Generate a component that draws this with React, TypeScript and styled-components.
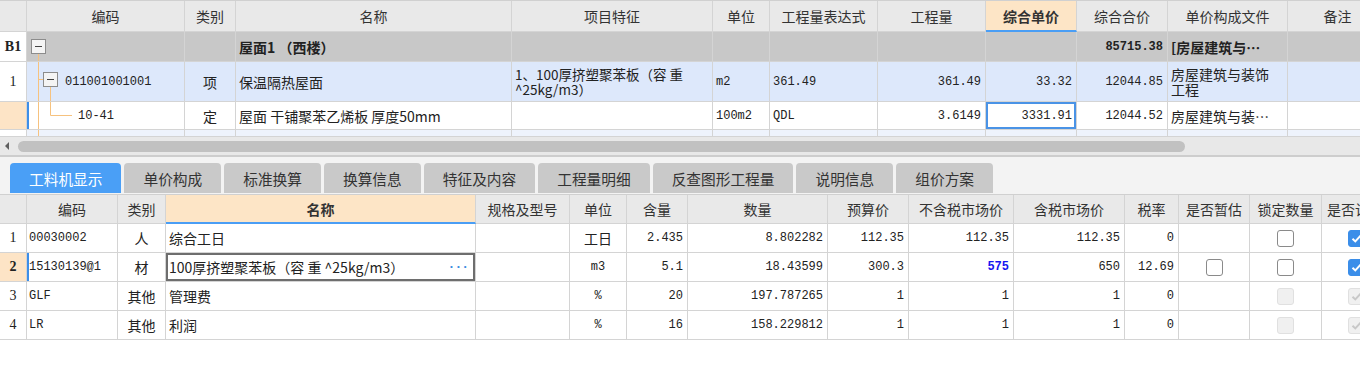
import React from "react";
import styled, { createGlobalStyle, css } from "styled-components";

const GlobalStyle = createGlobalStyle`
  html, body {
    margin: 0;
    padding: 0;
    background: #fff;
  }
  body {
    font-family: "Noto Sans CJK SC", "Noto Sans", sans-serif;
    color: #333;
  }
  * {
    box-sizing: border-box;
  }
`;

const CJK = `"Noto Sans CJK SC", "Noto Sans", sans-serif`;
const MONO = `"Liberation Mono", "Noto Sans CJK SC", monospace`;
const GRID = "#d4d4d4";
const TREE = "#f6c27f";

const TOP_COLS = [27, 158, 51, 276, 201, 57, 108, 108, 91, 91, 120, 100];
const BOTTOM_COLS = [27, 91, 48, 310, 94, 57, 61, 140, 81, 105, 111, 54, 71, 72, 70];
const tpl = (cols: number[]) => cols.map((c) => `${c}px`).join(" ");

type Align = "left" | "center" | "right";
type BoxState = "off" | "on" | "disabled" | "disabledOn";

export default function App() {
  return (
    <>
      <GlobalStyle />
      <Screen>
        <TopGrid>
          <GridRow $cols={tpl(TOP_COLS)} $h={31}>
            <HeadCell />
            <HeadCell>编码</HeadCell>
            <HeadCell>类别</HeadCell>
            <HeadCell>名称</HeadCell>
            <HeadCell>项目特征</HeadCell>
            <HeadCell>单位</HeadCell>
            <HeadCell>工程量表达式</HeadCell>
            <HeadCell>工程量</HeadCell>
            <HeadCell $active>综合单价</HeadCell>
            <HeadCell>综合合价</HeadCell>
            <HeadCell>单价构成文件</HeadCell>
            <HeadCell>备注</HeadCell>
          </GridRow>

          <GridRow $cols={tpl(TOP_COLS)} $h={30} $bg="#c8c8c8">
            <NoCell $bold>B1</NoCell>
            <Cell>
              <TreeGuide kind="root" h={30} />
            </Cell>
            <Cell />
            <Cell $bold>屋面1 （西楼）</Cell>
            <Cell />
            <Cell />
            <Cell />
            <Cell />
            <Cell />
            <Cell $mono $bold $align="right">85715.38</Cell>
            <Cell $bold>[房屋建筑与…</Cell>
            <Cell />
          </GridRow>

          <GridRow $cols={tpl(TOP_COLS)} $h={40} $bg="#dde8fb">
            <NoCell>1</NoCell>
            <Cell $mono $indent={38}>
              <TreeGuide kind="item" h={40} />
              <Label>011001001001</Label>
            </Cell>
            <Cell $align="center">项</Cell>
            <Cell>保温隔热屋面</Cell>
            <Cell $wrap $small>{"1、100厚挤塑聚苯板（容 重\n^25kg/m3）"}</Cell>
            <Cell $mono>m2</Cell>
            <Cell $mono>361.49</Cell>
            <Cell $mono $align="right">361.49</Cell>
            <Cell $mono $align="right">33.32</Cell>
            <Cell $mono $align="right">12044.85</Cell>
            <Cell $wrap>{"房屋建筑与装饰\n工程"}</Cell>
            <Cell />
          </GridRow>

          <GridRow $cols={tpl(TOP_COLS)} $h={28}>
            <NoCell $current />
            <Cell $mono $indent={51} $marker>
              <TreeGuide kind="leaf" h={28} />
              <Label>10-41</Label>
            </Cell>
            <Cell $align="center">定</Cell>
            <Cell>屋面 干铺聚苯乙烯板 厚度50mm</Cell>
            <Cell />
            <Cell $mono>100m2</Cell>
            <Cell $mono>QDL</Cell>
            <Cell $mono $align="right">3.6149</Cell>
            <Cell $mono $align="right" $focus="blue">3331.91</Cell>
            <Cell $mono $align="right">12044.52</Cell>
            <Cell>房屋建筑与装…</Cell>
            <Cell />
          </GridRow>

          <GridRow $cols={tpl(TOP_COLS)} $h={7} $bg="#eef3fc">
            <NoCell />
            <Cell>
              <TreeGuide kind="tail" h={7} />
            </Cell>
            {TOP_COLS.slice(2).map((_, i) => (
              <Cell key={i} />
            ))}
          </GridRow>
        </TopGrid>

        <ScrollBar>
          <svg width="18" height="18" viewBox="0 0 18 18">
            <path d="M9 5 L5 9 L9 13 Z" fill="#606060" />
          </svg>
          <Thumb />
        </ScrollBar>

        <TabBar>
          {[
            "工料机显示",
            "单价构成",
            "标准换算",
            "换算信息",
            "特征及内容",
            "工程量明细",
            "反查图形工程量",
            "说明信息",
            "组价方案",
          ].map((t, i) => (
            <Tab key={t} $active={i === 0}>
              {t}
            </Tab>
          ))}
        </TabBar>

        <BottomGrid>
          <GridRow $cols={tpl(BOTTOM_COLS)} $h={29}>
            <HeadCell />
            <HeadCell>编码</HeadCell>
            <HeadCell>类别</HeadCell>
            <HeadCell $active>名称</HeadCell>
            <HeadCell>规格及型号</HeadCell>
            <HeadCell>单位</HeadCell>
            <HeadCell>含量</HeadCell>
            <HeadCell>数量</HeadCell>
            <HeadCell>预算价</HeadCell>
            <HeadCell>不含税市场价</HeadCell>
            <HeadCell>含税市场价</HeadCell>
            <HeadCell>税率</HeadCell>
            <HeadCell>是否暂估</HeadCell>
            <HeadCell>锁定数量</HeadCell>
            <HeadCell $align="left">是否计</HeadCell>
          </GridRow>

          {materials.map((m) => (
            <GridRow key={m.no} $cols={tpl(BOTTOM_COLS)} $h={29}>
              <NoCell $current={m.active} $bold={m.active}>
                {m.no}
              </NoCell>
              <Cell $mono $marker={m.active} $pad={2}>
                {m.code}
              </Cell>
              <Cell $align="center">{m.kind}</Cell>
              <Cell $focus={m.active ? "gray" : undefined}>
                <Grow>{m.name}</Grow>
                {m.active && <MoreDots>···</MoreDots>}
              </Cell>
              <Cell />
              <Cell $mono={!m.unitCjk} $align="center">
                {m.unit}
              </Cell>
              <Cell $mono $align="right">{m.qty}</Cell>
              <Cell $mono $align="right">{m.amount}</Cell>
              <Cell $mono $align="right">{m.budget}</Cell>
              <Cell $mono $align="right">
                {m.active ? <Changed>{m.exTax}</Changed> : m.exTax}
              </Cell>
              <Cell $mono $align="right">{m.incTax}</Cell>
              <Cell $mono $align="right">{m.rate}</Cell>
              <Cell $align="center">{m.est && <CheckBox state={m.est} />}</Cell>
              <Cell $align="center">
                <CheckBox state={m.lock} />
              </Cell>
              <Cell $align="center">
                <CheckBox state={m.calc} />
              </Cell>
            </GridRow>
          ))}
        </BottomGrid>
      </Screen>
    </>
  );
}

const materials: {
  no: string;
  code: string;
  kind: string;
  name: string;
  unit: string;
  unitCjk?: boolean;
  qty: string;
  amount: string;
  budget: string;
  exTax: string;
  incTax: string;
  rate: string;
  est: BoxState | null;
  lock: BoxState;
  calc: BoxState;
  active?: boolean;
}[] = [
  {
    no: "1",
    code: "00030002",
    kind: "人",
    name: "综合工日",
    unit: "工日",
    unitCjk: true,
    qty: "2.435",
    amount: "8.802282",
    budget: "112.35",
    exTax: "112.35",
    incTax: "112.35",
    rate: "0",
    est: null,
    lock: "off",
    calc: "on",
  },
  {
    no: "2",
    code: "15130139@1",
    kind: "材",
    name: "100厚挤塑聚苯板（容 重 ^25kg/m3）",
    unit: "m3",
    qty: "5.1",
    amount: "18.43599",
    budget: "300.3",
    exTax: "575",
    incTax: "650",
    rate: "12.69",
    est: "off",
    lock: "off",
    calc: "on",
    active: true,
  },
  {
    no: "3",
    code: "GLF",
    kind: "其他",
    name: "管理费",
    unit: "%",
    qty: "20",
    amount: "197.787265",
    budget: "1",
    exTax: "1",
    incTax: "1",
    rate: "0",
    est: null,
    lock: "disabled",
    calc: "disabledOn",
  },
  {
    no: "4",
    code: "LR",
    kind: "其他",
    name: "利润",
    unit: "%",
    qty: "16",
    amount: "158.229812",
    budget: "1",
    exTax: "1",
    incTax: "1",
    rate: "0",
    est: null,
    lock: "disabled",
    calc: "disabledOn",
  },
];

function TreeGuide({ kind, h }: { kind: "root" | "item" | "leaf" | "tail"; h: number }) {
  return (
    <GuideSvg width={60} height={h}>
      {kind === "root" && (
        <>
          <line x1="11.5" y1="22" x2="11.5" y2={h} stroke={TREE} />
          <rect x="4.5" y="7.5" width="14" height="14" fill="#f4f4f4" stroke="#8c8c8c" />
          <line x1="8" y1="14.5" x2="15" y2="14.5" stroke="#444" />
        </>
      )}
      {kind === "item" && (
        <>
          <line x1="11.5" y1="0" x2="11.5" y2={h} stroke={TREE} />
          <line x1="11.5" y1="17.5" x2="16.5" y2="17.5" stroke={TREE} />
          <line x1="23.5" y1="24" x2="23.5" y2={h} stroke={TREE} />
          <rect x="16.5" y="10.5" width="14" height="14" fill="#f4f4f4" stroke="#8c8c8c" />
          <line x1="20" y1="17.5" x2="27" y2="17.5" stroke="#444" />
        </>
      )}
      {kind === "leaf" && (
        <>
          <line x1="11.5" y1="0" x2="11.5" y2={h} stroke={TREE} />
          <line x1="23.5" y1="0" x2="23.5" y2="13.5" stroke={TREE} />
          <line x1="23.5" y1="13.5" x2="45" y2="13.5" stroke={TREE} />
        </>
      )}
      {kind === "tail" && <line x1="11.5" y1="0" x2="11.5" y2={h} stroke={TREE} />}
    </GuideSvg>
  );
}

function CheckBox({ state }: { state: BoxState }) {
  const checked = state === "on" || state === "disabledOn";
  return (
    <Box $state={state}>
      {checked && (
        <svg width="13" height="13" viewBox="0 0 13 13">
          <path
            d="M2.5 6.8 L5.3 9.4 L10.6 3.6"
            fill="none"
            stroke={state === "on" ? "#fff" : "#c8c8c8"}
            strokeWidth="2"
          />
        </svg>
      )}
    </Box>
  );
}

const Screen = styled.div`
  width: 1360px;
  height: 367px;
  overflow: hidden;
  background: #fff;
`;

const TopGrid = styled.div`
  border-top: 1px solid #d0d0d0;
  overflow: hidden;
`;

const BottomGrid = styled.div`
  border-top: 1px solid #d0d0d0;
  overflow: hidden;
`;

const GridRow = styled.div<{ $cols: string; $h: number; $bg?: string }>`
  display: grid;
  grid-template-columns: ${({ $cols }) => $cols};
  height: ${({ $h }) => $h}px;
  background: ${({ $bg }) => $bg ?? "#fff"};
  width: max-content;
`;

const justify = (a?: Align) =>
  a === "right" ? "flex-end" : a === "center" ? "center" : "flex-start";

const Cell = styled.div<{
  $align?: Align;
  $mono?: boolean;
  $bold?: boolean;
  $wrap?: boolean;
  $small?: boolean;
  $indent?: number;
  $pad?: number;
  $marker?: boolean;
  $focus?: "blue" | "gray";
}>`
  position: relative;
  display: flex;
  align-items: center;
  justify-content: ${({ $align }) => justify($align)};
  min-width: 0;
  overflow: hidden;
  padding: 0 ${({ $align }) => ($align === "right" ? 4 : 3)}px 0
    ${({ $indent, $pad }) => $indent ?? $pad ?? 3}px;
  border-right: 1px solid ${GRID};
  border-bottom: 1px solid ${GRID};
  font-family: ${({ $mono }) => ($mono ? MONO : CJK)};
  font-size: ${({ $mono, $small }) => ($mono ? 12 : $small ? 13.5 : 14)}px;
  font-weight: ${({ $bold }) => ($bold ? 700 : 400)};
  color: #222;
  white-space: ${({ $wrap }) => ($wrap ? "pre-line" : "nowrap")};
  line-height: ${({ $wrap }) => ($wrap ? "15px" : "normal")};
  ${({ $marker }) =>
    $marker &&
    css`
      box-shadow: inset 2px 0 0 #3d8ee8;
    `}
  ${({ $focus }) =>
    $focus &&
    css`
      box-shadow: inset 0 0 0 2px ${$focus === "blue" ? "#4a93e6" : "#6e6e6e"};
    `}
`;

const NoCell = styled(Cell).attrs({ $align: "center" as Align })<{ $current?: boolean }>`
  background: ${({ $current }) => ($current ? "#fde4c6" : "#fff")};
  font-family: "Liberation Serif", serif;
  font-size: 14px;
  padding: 0;
`;

const HeadCell = styled.div<{ $active?: boolean; $align?: Align }>`
  display: flex;
  align-items: center;
  justify-content: ${({ $align }) => justify($align ?? "center")};
  padding: 0 ${({ $align }) => ($align === "left" ? "5px" : "0")};
  overflow: hidden;
  white-space: nowrap;
  border-right: 1px solid ${GRID};
  border-bottom: ${({ $active }) => ($active ? "2px solid #4a9ef5" : `1px solid ${GRID}`)};
  background: ${({ $active }) => ($active ? "#fde5c6" : "#e9e9e9")};
  font-family: ${CJK};
  font-size: 14px;
  font-weight: ${({ $active }) => ($active ? 700 : 400)};
  color: #333;
`;

const GuideSvg = styled.svg`
  position: absolute;
  left: 0;
  top: 0;
  pointer-events: none;
`;

const Label = styled.span`
  position: relative;
`;

const Grow = styled.span`
  flex: 1;
  min-width: 0;
  white-space: nowrap;
`;

const MoreDots = styled.span`
  color: #3b8de0;
  font-family: ${MONO};
  font-size: 13px;
  font-weight: 700;
  padding-right: 4px;
  letter-spacing: -1px;
`;

const Changed = styled.span`
  color: #1515f0;
  font-weight: 700;
`;

const ScrollBar = styled.div`
  display: flex;
  align-items: center;
  height: 18px;
  background: #e8e8e8;
`;

const Thumb = styled.div`
  width: 1167px;
  height: 11px;
  border-radius: 6px;
  background: #c1c1c1;
`;

const TabBar = styled.div`
  display: flex;
  align-items: flex-end;
  gap: 3px;
  height: 39px;
  padding: 6px 0 1px 10px;
  background: #f3f3f3;
  border-top: 2px solid #cdcdcd;
`;

const Tab = styled.div<{ $active?: boolean }>`
  display: flex;
  align-items: center;
  height: 30px;
  padding: 0 19px;
  border-radius: 4px 4px 0 0;
  background: ${({ $active }) => ($active ? "#4a9ff6" : "#c9c9c9")};
  color: ${({ $active }) => ($active ? "#fff" : "#333")};
  font-family: ${CJK};
  font-size: 14.7px;
  white-space: nowrap;
`;

const Box = styled.span<{ $state: BoxState }>`
  display: inline-flex;
  align-items: center;
  justify-content: center;
  width: 17px;
  height: 17px;
  border-radius: 3px;
  ${({ $state }) =>
    $state === "on"
      ? css`
          background: #3b8ee9;
          border: 1px solid #3b8ee9;
        `
      : $state === "off"
      ? css`
          background: #fff;
          border: 1px solid #8a8a8a;
        `
      : css`
          background: #f0f0f0;
          border: 1px solid #e0e0e0;
        `}
`;
